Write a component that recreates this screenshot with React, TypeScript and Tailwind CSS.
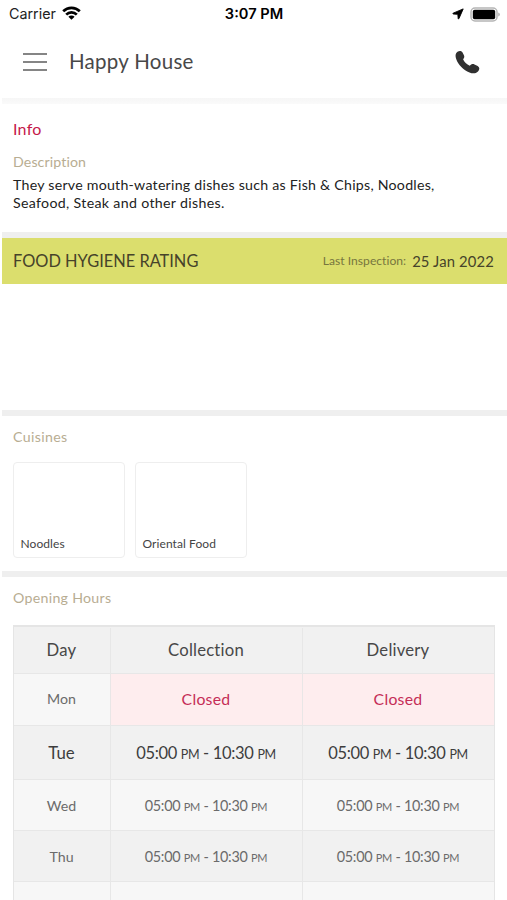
import clsx from 'clsx'

interface Slot {
  from: string
  to: string
}

interface OpeningDay {
  day: string
  collection: Slot | null
  delivery: Slot | null
  today?: boolean
  height: string
}

const evening: Slot = { from: '05:00', to: '10:30' }

const openingHours: OpeningDay[] = [
  { day: 'Mon', collection: null, delivery: null, height: 'h-[52px] *:pb-0.5' },
  { day: 'Tue', collection: evening, delivery: evening, today: true, height: 'h-[54px]' },
  { day: 'Wed', collection: evening, delivery: evening, height: 'h-[51px] *:pt-px' },
  { day: 'Thu', collection: evening, delivery: evening, height: 'h-[51px] *:pt-px' },
]

const cuisines = ['Noodles', 'Oriental Food']

function StatusBar() {
  return (
    <div className="grid h-[27px] shrink-0 grid-cols-3 items-center pt-px pr-[7px] pl-[9px] font-['Inter',sans-serif] text-black">
      <div className="flex items-center gap-[6px]">
        <span className="text-[14.3px] leading-none text-[#222]">Carrier</span>
        <svg className="-mt-px" width="19" height="14" viewBox="0 0 19 14" fill="none" stroke="#000" strokeWidth="2.7">
          <path d="M1.2 5.2a11.8 11.8 0 0 1 16.6 0" />
          <path d="M4.2 8.6a7.5 7.5 0 0 1 10.6 0" />
          <path d="M9.5 13.8 6.4 10.8a4.4 4.4 0 0 1 6.2 0Z" fill="#000" stroke="none" />
        </svg>
      </div>
      <span className="-ml-px pt-px text-center text-[14.6px] leading-none font-semibold whitespace-nowrap">
        3:07 PM
      </span>
      <div className="flex items-center justify-end gap-[6px]">
        <svg width="12" height="12" viewBox="0 0 12 12" fill="#000" stroke="#000" strokeWidth=".9" strokeLinejoin="round">
          <path d="M11.2.9 6.9 10.7Q6.4 11.3 6.2 10.6L5.8 6.3 1.3 6Q.4 5.7 1.1 5.2Z" />
        </svg>
        <svg width="30" height="15" viewBox="0 0 30 15">
          <rect x="1" y="1" width="26" height="13" rx="4" fill="#fff" stroke="#b5b5b5" strokeWidth="1.5" />
          <rect x="2.8" y="2.8" width="22.4" height="9.4" rx="1.8" fill="#000" />
          <path d="M28.2 5.5q1.7.5 1.7 2t-1.7 2Z" fill="#b5b5b5" />
        </svg>
      </div>
    </div>
  )
}

function Header() {
  return (
    <header className="flex h-[71px] shrink-0 items-center pr-[27px] pb-px pl-[23px]">
      <button aria-label="Menu" className="flex h-[18px] w-[24px] flex-col justify-between">
        <span className="h-[2px] w-full bg-[#858585]" />
        <span className="h-[2px] w-full bg-[#858585]" />
        <span className="h-[2px] w-full bg-[#858585]" />
      </button>
      <h1 className="ml-[22px] flex-1 pb-px text-[20.5px] tracking-[0.28px] text-[#484848]">Happy House</h1>
      <button aria-label="Call">
        <svg width="25" height="24" viewBox="0 0 25 24" fill="#303030">
          <path d="M1.3 3C2.7.7 6 .2 7.4 2.2L8.7 4.7C9.8 6.6 9.3 8 8.1 9.2C9.2 11.8 11.7 14.3 14.8 15.7C16.1 14.1 17.7 13.6 19.5 14.4L22.7 16C24.9 17.3 24.8 19.6 23 21.4C20.8 23.6 17.7 23.7 14.5 22.4C8.5 20 3.2 15 1.2 9C.4 6.5.3 4.7 1.3 3Z" />
        </svg>
      </button>
    </header>
  )
}

function Divider() {
  return <div className="ml-[2px] h-[6px] shrink-0 bg-[#efefef]" />
}

function HoursCell({ slot, today }: { slot: Slot | null; today?: boolean }) {
  if (!slot) {
    return (
      <div className="flex items-center justify-center border-l border-[#e9e6e6] bg-[#feedee] pr-px text-[15.8px] tracking-[0.25px] text-[#c52d57]">
        Closed
      </div>
    )
  }
  return (
    <div
      className={clsx(
        'flex items-center justify-center border-l border-[#e7e7e7] pr-px',
        today ? 'pt-px text-[16.5px] tracking-[-0.34px]' : 'text-[14.4px] tracking-[-0.27px]'
      )}
    >
      <span className="whitespace-pre">
        {slot.from} <small className={today ? 'text-[12.5px]' : 'text-[11px]'}>PM</small> - {slot.to}{' '}
        <small className={today ? 'text-[12.5px]' : 'text-[11px]'}>PM</small>
      </span>
    </div>
  )
}

function OpeningHours() {
  return (
    <div className="mx-[13px] mt-[17px] w-[482px] border border-t-2 border-[#e5e5e5]">
      <div className="grid h-[46px] grid-cols-[96px_192px_192px] bg-[#f1f1f1] pt-px text-[16.7px] tracking-[0.2px] text-[#484848]">
        <div className="flex items-center justify-center pr-px">Day</div>
        <div className="flex items-center justify-center border-l border-[#e7e7e7] pr-px">Collection</div>
        <div className="flex items-center justify-center border-l border-[#e7e7e7] pr-px">Delivery</div>
      </div>
      {openingHours.map((row, index) => (
        <div
          key={row.day}
          className={clsx(
            'grid grid-cols-[96px_192px_192px] border-t border-[#e7e7e7]',
            row.height,
            index % 2 ? 'bg-[#f1f1f1]' : 'bg-[#f7f7f7]',
            row.today ? 'text-[#3d3d3d]' : 'text-[#6b6b6b]'
          )}
        >
          <div className={clsx('flex items-center justify-center pr-px', row.today ? 'text-[16.8px]' : 'text-[14.2px]')}>
            {row.day}
          </div>
          <HoursCell slot={row.collection} today={row.today} />
          <HoursCell slot={row.delivery} today={row.today} />
        </div>
      ))}
      <div className="grid h-[51px] grid-cols-[96px_192px_192px] border-t border-[#e7e7e7] bg-[#f7f7f7]">
        <div />
        <div className="border-l border-[#e7e7e7]" />
        <div className="border-l border-[#e7e7e7]" />
      </div>
    </div>
  )
}

export default function App() {
  return (
    <div className="flex h-[900px] w-[507px] flex-col overflow-hidden bg-white font-['Lato','Liberation_Sans',sans-serif]">
      <StatusBar />
      <Header />
      <div className="ml-[2px] h-[6px] shrink-0 bg-linear-to-b from-[#f6f6f6] to-[#fafafa]" />

      <section className="h-[128px] shrink-0 px-[13px] pt-[15px]">
        <h2 className="text-[16px] leading-5 tracking-[0.25px] text-[#c5184b]">Info</h2>
        <h3 className="mt-[13px] text-[14.2px] leading-5 tracking-[0.1px] text-[#b8ad92]">Description</h3>
        <p className="mt-[4px] text-[14.2px] leading-[18px] tracking-[0.24px] whitespace-nowrap text-[#222]">
          They serve mouth-watering dishes such as Fish &amp; Chips, Noodles,
          <br />
          <span className="tracking-[0.32px]">Seafood, Steak and other dishes.</span>
        </p>
      </section>

      <Divider />
      <section className="h-[172px] shrink-0">
        <div className="ml-[2px] flex h-[46px] items-center justify-between bg-[#dbde6d] pr-[13px] pl-[11px]">
          <h2 className="text-[16.4px] text-[#46432a]">FOOD HYGIENE RATING</h2>
          <div className="flex items-center gap-[6px]">
            <span className="text-[12.1px] tracking-[0.03px] text-[#77763e]">Last Inspection:</span>
            <span className="text-[14.8px] tracking-[0.15px] text-[#46432a]">25 Jan 2022</span>
          </div>
        </div>
      </section>

      <Divider />
      <section className="h-[155px] shrink-0 px-[13px] pt-[11px]">
        <h3 className="text-[14.2px] leading-5 tracking-[0.35px] text-[#b8ad92]">Cuisines</h3>
        <div className="mt-[15px] flex gap-[10px]">
          {cuisines.map((cuisine) => (
            <div
              key={cuisine}
              className="flex h-[96px] w-[112px] items-end rounded-[4px] border border-[#eeeeee] px-[6.5px] pb-[4px] text-[12px] leading-[18px] tracking-[0.08px] text-[#444]"
            >
              {cuisine}
            </div>
          ))}
        </div>
      </section>

      <Divider />
      <section className="pt-[11px]">
        <h3 className="px-[13px] text-[14.2px] leading-5 tracking-[0.28px] text-[#b8ad92]">Opening Hours</h3>
        <OpeningHours />
      </section>
    </div>
  )
}
